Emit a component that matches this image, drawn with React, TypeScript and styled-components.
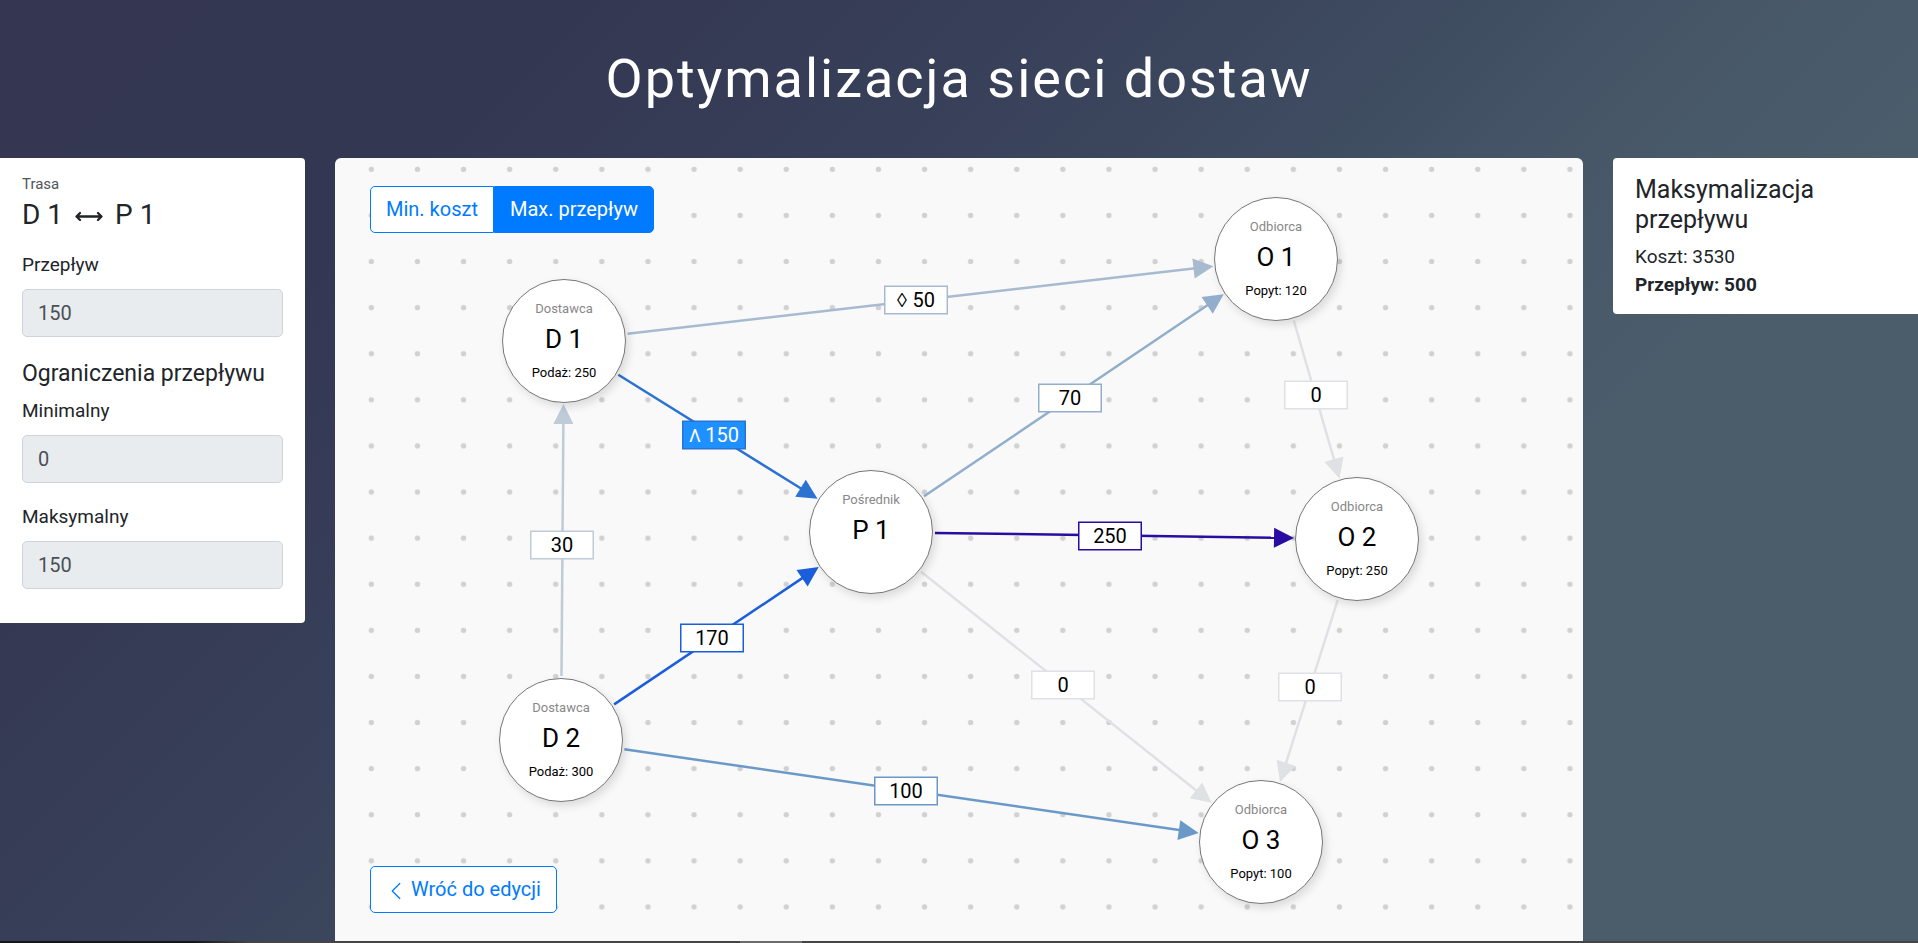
import React, { useState } from 'react';
import styled, { createGlobalStyle } from 'styled-components';

const GlobalStyle = createGlobalStyle`
  *, *::before, *::after { box-sizing: border-box; }
  body {
    margin: 0;
    font-family: Roboto, "Liberation Sans", sans-serif;
    font-size: 19px;
    line-height: 28px;
    color: #212529;
  }
  h1, h2, h3, p { margin: 0; font-weight: 400; }
`;

const Page = styled.div`
  min-height: 100vh;
  display: flex;
  flex-direction: column;
  background: linear-gradient(
    135deg,
    #343652 0%,
    #343752 20%,
    #373e58 33%,
    #3a445b 42%,
    #3f4d61 52%,
    #475768 61%,
    #4b5d6b 72%,
    #4b5d6b 100%
  );
`;

const Header = styled.header`
  padding: 47px 16px;
  text-align: center;
`;

const PageTitle = styled.h1`
  font-size: 54px;
  line-height: 64px;
  letter-spacing: 2px;
  color: #fff;
`;

const Workspace = styled.main`
  flex: 1;
  display: grid;
  grid-template-columns: 305px minmax(0, 1fr) 305px;
  column-gap: 30px;
  align-items: start;
`;

const SidePanel = styled.aside<{ $side: 'left' | 'right' }>`
  padding: ${({ $side }) => ($side === 'left' ? '14px 22px' : '17px 22px 15px')};
  background: #fff;
  border-radius: ${({ $side }) => ($side === 'left' ? '0 4px 4px 0' : '4px 0 0 4px')};
`;

const Caption = styled.p`
  font-size: 15px;
  line-height: 24px;
  color: #50555a;
`;

const RouteTitle = styled.h2`
  display: flex;
  align-items: center;
  gap: 12px;
  margin-bottom: 17px;
  font-size: 28px;
  line-height: 38px;
`;

const SectionTitle = styled.h3`
  margin-bottom: 6px;
  font-size: 23px;
  line-height: 34px;
`;

const Field = styled.div`
  display: flex;
  flex-direction: column;
  gap: 10px;
  margin-bottom: 20px;
`;

const Input = styled.input`
  width: 100%;
  height: 48px;
  padding: 0 15px;
  border: 1px solid #ced4da;
  border-radius: 5px;
  background: #e9ecef;
  font: inherit;
  font-size: 20px;
  color: #495057;
`;

const ResultTitle = styled.h2`
  margin-bottom: 8px;
  font-size: 25px;
  line-height: 30px;
`;

const ResultLine = styled.p<{ $strong?: boolean }>`
  font-weight: ${({ $strong }) => ($strong ? 700 : 400)};
`;

const Canvas = styled.section`
  position: relative;
  align-self: stretch;
  display: flex;
  flex-direction: column;
  justify-content: space-between;
  align-items: flex-start;
  min-height: 780px;
  padding: 28px 35px;
  overflow: hidden;
  border-radius: 6px 6px 0 0;
  background: #f9f9f9;
`;

const Drawing = styled.svg`
  position: absolute;
  inset: 0;
  width: 100%;
  height: 100%;
`;

const ButtonGroup = styled.div`
  position: relative;
  display: flex;
`;

const Button = styled.button<{ $active?: boolean }>`
  position: relative;
  display: flex;
  align-items: center;
  gap: 5px;
  padding: 8px 15px;
  border: 1px solid #007bff;
  border-radius: 5px;
  background: ${({ $active }) => ($active ? '#007bff' : '#fff')};
  color: ${({ $active }) => ($active ? '#fff' : '#007bff')};
  font: inherit;
  font-size: 20px;
  line-height: 29px;
  cursor: pointer;

  ${ButtonGroup} &:first-child { border-radius: 5px 0 0 5px; }
  ${ButtonGroup} &:last-child { border-radius: 0 5px 5px 0; }
`;

const Node = styled.div`
  position: absolute;
  width: 124px;
  height: 124px;
  padding-top: 19px;
  border: 1px solid #777;
  border-radius: 50%;
  background: #fff;
  box-shadow: 3px 4px 8px rgba(0, 0, 0, 0.12);
  text-align: center;
  color: #000;
`;

const NodeKind = styled.div`
  font-size: 13px;
  line-height: 20px;
  color: #888;
`;

const NodeName = styled.div`
  font-size: 26px;
  line-height: 40px;
`;

const NodeAmount = styled.div`
  font-size: 13px;
  line-height: 28px;
`;

const EdgeText = styled.text`
  font-size: 20px;
  text-anchor: middle;
`;

const LimitMark = styled.tspan<{ $mark: string }>`
  font-family: ${({ $mark }) => ($mark === '◊' ? '"Liberation Sans", sans-serif' : 'Roboto, sans-serif')};
  font-size: ${({ $mark }) => ($mark === '◊' ? 20 : 18)}px;
`;

const BottomStrip = styled.div`
  height: 2px;
  background: linear-gradient(
    90deg,
    #151515 0 10%,
    #454545 13% 38.6%,
    #6c6c6c 38.6% 41.8%,
    #454545 41.8%
  );
`;

type NodeData = { id: string; kind: string; name: string; amount?: string; x: number; y: number };
type EdgeData = {
  from: string;
  to: string;
  mark?: string;
  flow: number;
  color: string;
  x: number;
  y: number;
  selected?: boolean;
};

const RADIUS = 62;

const nodes: NodeData[] = [
  { id: 'D1', kind: 'Dostawca', name: 'D 1', amount: 'Podaż: 250', x: 229, y: 183 },
  { id: 'D2', kind: 'Dostawca', name: 'D 2', amount: 'Podaż: 300', x: 226, y: 582 },
  { id: 'P1', kind: 'Pośrednik', name: 'P 1', x: 536, y: 374 },
  { id: 'O1', kind: 'Odbiorca', name: 'O 1', amount: 'Popyt: 120', x: 941, y: 101 },
  { id: 'O2', kind: 'Odbiorca', name: 'O 2', amount: 'Popyt: 250', x: 1022, y: 381 },
  { id: 'O3', kind: 'Odbiorca', name: 'O 3', amount: 'Popyt: 100', x: 926, y: 684 },
];

const edges: EdgeData[] = [
  { from: 'D1', to: 'O1', mark: '◊', flow: 50, color: '#a8bad0', x: 581, y: 142 },
  { from: 'D1', to: 'P1', mark: 'Λ', flow: 150, color: '#2b72d1', x: 379, y: 277, selected: true },
  { from: 'D2', to: 'D1', flow: 30, color: '#bfcbd7', x: 227, y: 387 },
  { from: 'D2', to: 'P1', flow: 170, color: '#1b5edb', x: 377, y: 480 },
  { from: 'D2', to: 'O3', flow: 100, color: '#6a99c8', x: 571, y: 633 },
  { from: 'P1', to: 'O1', flow: 70, color: '#92aecb', x: 735, y: 240 },
  { from: 'P1', to: 'O2', flow: 250, color: '#290da2', x: 775, y: 378 },
  { from: 'P1', to: 'O3', flow: 0, color: '#e0e1e5', x: 728, y: 527 },
  { from: 'O1', to: 'O2', flow: 0, color: '#e0e1e5', x: 981, y: 237 },
  { from: 'O2', to: 'O3', flow: 0, color: '#e0e1e5', x: 975, y: 529 },
];

function Edge({ edge }: { edge: EdgeData }) {
  const a = nodes.find((n) => n.id === edge.from)!;
  const b = nodes.find((n) => n.id === edge.to)!;
  const length = Math.hypot(b.x - a.x, b.y - a.y);
  const angle = (Math.atan2(b.y - a.y, b.x - a.x) * 180) / Math.PI;
  const tip = length - RADIUS - 1;
  return (
    <g>
      <g transform={`translate(${a.x} ${a.y}) rotate(${angle})`}>
        <line x1={RADIUS + 2} x2={tip - 18} y1={0} y2={0} stroke={edge.color} strokeWidth={2.5} />
        <path d={`M${tip} 0l-20 -10v20z`} fill={edge.color} />
      </g>
      <rect
        x={edge.x - 31.25}
        y={edge.y - 13.75}
        width={62.5}
        height={27.5}
        fill={edge.selected ? '#1e90ff' : '#fff'}
        stroke={edge.color}
        strokeWidth={1.5}
      />
      <EdgeText x={edge.x} y={edge.y + 7} fill={edge.selected ? '#fff' : '#000'}>
        {edge.mark && <LimitMark $mark={edge.mark}>{edge.mark + ' '}</LimitMark>}
        {edge.flow}
      </EdgeText>
    </g>
  );
}

function RouteArrow() {
  return (
    <svg width="28" height="12" viewBox="0 0 28 12" fill="none" stroke="#212529" strokeWidth="2.3" strokeLinecap="round" strokeLinejoin="round" aria-hidden="true">
      <path d="M2 7.5H26M5 4L1.5 7.5L5 11M23 4L26.5 7.5L23 11" />
    </svg>
  );
}

function ChevronLeft() {
  return (
    <svg width="20" height="20" viewBox="0 0 16 16" fill="none" stroke="currentColor" strokeLinecap="round" strokeLinejoin="round" aria-hidden="true">
      <path d="M11 2.8L5 8.8L11 14.8" />
    </svg>
  );
}

export default function App() {
  const [mode, setMode] = useState<'cost' | 'flow'>('flow');
  return (
    <Page>
      <GlobalStyle />
      <Header>
        <PageTitle>Optymalizacja sieci dostaw</PageTitle>
      </Header>
      <Workspace>
        <SidePanel $side="left">
          <Caption>Trasa</Caption>
          <RouteTitle>
            D 1 <RouteArrow /> P 1
          </RouteTitle>
          <Field>
            <label htmlFor="flow">Przepływ</label>
            <Input id="flow" value="150" disabled readOnly />
          </Field>
          <SectionTitle>Ograniczenia przepływu</SectionTitle>
          <Field>
            <label htmlFor="min">Minimalny</label>
            <Input id="min" value="0" disabled readOnly />
          </Field>
          <Field>
            <label htmlFor="max">Maksymalny</label>
            <Input id="max" value="150" disabled readOnly />
          </Field>
        </SidePanel>
        <Canvas>
          <Drawing>
            <defs>
              <pattern id="dots" x="13.3" y="-11.7" width="46.1" height="46.1" patternUnits="userSpaceOnUse">
                <circle cx="23.05" cy="23.05" r="2.7" fill="#d1d1d1" />
              </pattern>
            </defs>
            <rect width="100%" height="100%" fill="url(#dots)" />
            {edges.map((edge) => (
              <Edge key={edge.from + edge.to} edge={edge} />
            ))}
          </Drawing>
          {nodes.map((node) => (
            <Node key={node.id} style={{ left: node.x - RADIUS, top: node.y - RADIUS }}>
              <NodeKind>{node.kind}</NodeKind>
              <NodeName>{node.name}</NodeName>
              {node.amount && <NodeAmount>{node.amount}</NodeAmount>}
            </Node>
          ))}
          <ButtonGroup>
            <Button type="button" $active={mode === 'cost'} onClick={() => setMode('cost')}>
              Min. koszt
            </Button>
            <Button type="button" $active={mode === 'flow'} onClick={() => setMode('flow')}>
              Max. przepływ
            </Button>
          </ButtonGroup>
          <Button type="button">
            <ChevronLeft />
            Wróć do edycji
          </Button>
        </Canvas>
        <SidePanel $side="right">
          <ResultTitle>Maksymalizacja przepływu</ResultTitle>
          <ResultLine>Koszt: 3530</ResultLine>
          <ResultLine $strong>Przepływ: 500</ResultLine>
        </SidePanel>
      </Workspace>
      <BottomStrip />
    </Page>
  );
}
